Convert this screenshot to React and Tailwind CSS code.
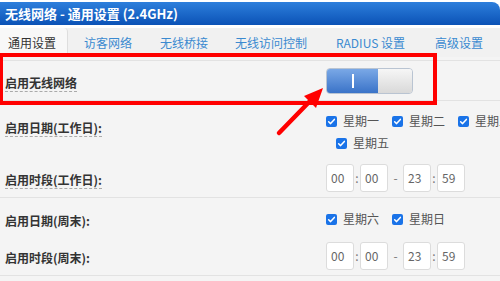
import { useState } from 'react';

const font = { fontFamily: '"Noto Sans CJK SC", "Liberation Sans", sans-serif' };

const tabs = [
  { name: '访客网络', w: 'w-[76px]' },
  { name: '无线桥接', w: 'w-[75px]' },
  { name: '无线访问控制', w: 'w-[101px]' },
  { name: 'RADIUS 设置', w: 'w-[99px]' },
  { name: '高级设置', w: 'w-[65px]' },
];

function Check({ label }) {
  return (
    <span className="flex shrink-0 items-center gap-[6px] whitespace-nowrap text-[12px] text-[#555]">
      <span className="flex h-[11px] w-[11px] items-center justify-center rounded-[2px] bg-[#1a73e8]">
        <svg viewBox="0 0 12 12" className="h-[9px] w-[9px]">
          <path d="M2.2 6.3 L4.8 8.8 L9.8 3.2" fill="none" stroke="#fff" strokeWidth="2" strokeLinecap="round" strokeLinejoin="round" />
        </svg>
      </span>
      {label}
    </span>
  );
}

function TimeBox({ value }) {
  return (
    <span className="flex h-[28px] w-[28px] items-center rounded-[3px] border border-[#dcdcdc] bg-white pl-[4px] text-[12px] text-[#666]">
      {value}
    </span>
  );
}

function TimeRange() {
  return (
    <div className="flex items-center text-[12px] text-[#777]">
      <TimeBox value="00" />
      <span className="w-[6px] text-center">:</span>
      <TimeBox value="00" />
      <span className="w-[15px] text-center">-</span>
      <TimeBox value="23" />
      <span className="w-[6px] text-center">:</span>
      <TimeBox value="59" />
    </div>
  );
}

function Label({ children, dashed }) {
  return (
    <span
      className={
        'whitespace-nowrap text-[12px] font-bold leading-[15px] text-[#333] ' +
        (dashed ? 'border-b border-dashed border-[#aaa]' : '')
      }
    >
      {children}
    </span>
  );
}

export default function App() {
  const [enabled, setEnabled] = useState(true);

  return (
    <div className="relative h-[281px] w-[500px] overflow-hidden bg-white" style={font}>
      <div className="mt-[2px] flex h-[23px] items-center rounded-tr-[8px] bg-gradient-to-b from-[#2d7fdc] to-[#0b52b6] pl-[5px] text-[13px] font-bold text-white">
        无线网络 - 通用设置 (2.4GHz)
      </div>

      <div className="mt-[3px] flex h-[29px] items-center bg-[#f1f1f1] text-[12px] text-[#3a8ad0]">
        <div className="mr-[16px] flex h-full w-[68px] shrink-0 items-center rounded-tr-[4px] border-r border-[#dedede] bg-[#f8f8f8] pl-[8px] text-[#333]">
          通用设置
        </div>
        {tabs.map((tab) => (
          <div key={tab.name} className={'shrink-0 whitespace-nowrap ' + tab.w}>
            {tab.name}
          </div>
        ))}
      </div>

      <div className="h-[281px] rounded-br-[6px] bg-[#f4f4f4] pt-[3px]">
        <div className="flex h-[41px] items-center border-y border-[#e2e2e2] pl-[5px]">
          <div className="w-[321px] shrink-0">
            <Label dashed>启用无线网络</Label>
          </div>
          <button
            onClick={() => setEnabled(!enabled)}
            className="flex h-[26px] w-[87px] shrink-0 overflow-hidden rounded-[4px] border border-[#b9c4d2]"
          >
            <span className="flex h-full w-[51px] items-center justify-center bg-gradient-to-b from-[#7aa8e6] to-[#3a73c8]">
              <span className="h-[14px] w-[2px] bg-white" />
            </span>
            <span className="h-full flex-1 bg-gradient-to-b from-[#f6f6f6] to-[#d9d9d9]" />
          </button>
        </div>

        <div className="border-b border-[#e2e2e2] pl-[5px] pt-[9px] pb-[5px]">
          <div className="flex">
            <div className="w-[321px] shrink-0 pt-[4px]">
              <Label dashed>启用日期(工作日):</Label>
            </div>
            <div className="flex shrink-0 flex-col">
              <div className="flex h-[22px] items-center gap-[13px]">
                <Check label="星期一" />
                <Check label="星期二" />
                <Check label="星期三" />
              </div>
              <div className="flex h-[22px] items-center pl-[10px]">
                <Check label="星期五" />
              </div>
            </div>
          </div>
          <div className="mt-[10px] flex items-center">
            <div className="w-[321px] shrink-0">
              <Label dashed>启用时段(工作日):</Label>
            </div>
            <TimeRange />
          </div>
        </div>

        <div className="border-b border-[#e2e2e2] pl-[5px] pt-[10px] pb-[5px]">
          <div className="flex h-[22px] items-center">
            <div className="w-[321px] shrink-0">
              <Label>启用日期(周末):</Label>
            </div>
            <div className="flex items-center gap-[13px]">
              <Check label="星期六" />
              <Check label="星期日" />
            </div>
          </div>
          <div className="mt-[12px] flex items-center">
            <div className="w-[321px] shrink-0">
              <Label>启用时段(周末):</Label>
            </div>
            <TimeRange />
          </div>
        </div>
      </div>

      <div className="pointer-events-none absolute left-[-1px] top-[53px] h-[52px] w-[438px] border-[4px] border-[#ff0000]" />

      <svg className="pointer-events-none absolute left-0 top-0" width="500" height="281">
        <line x1="279" y1="133" x2="312" y2="99" stroke="#ff0000" strokeWidth="4.5" strokeLinecap="round" />
        <polygon points="323,88 304,96 316,108" fill="#ff0000" />
      </svg>
    </div>
  );
}
